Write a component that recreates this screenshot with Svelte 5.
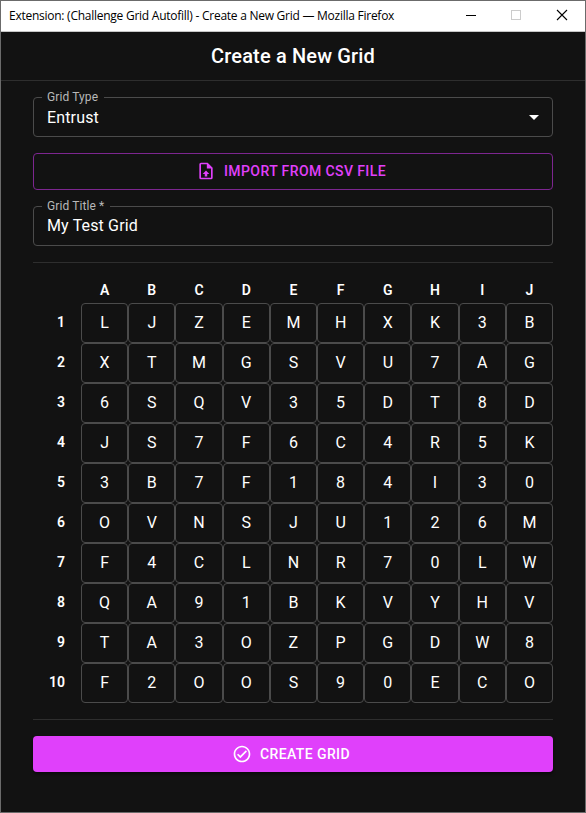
<script>
  const columns = 'ABCDEFGHIJ'.split('');
  const rows = [
    'LJZEMHXK3B',
    'XTMGSVU7AG',
    '6SQV35DT8D',
    'JS7F6C4R5K',
    '3B7F184I30',
    'OVNSJU126M',
    'F4CLNR70LW',
    'QA91BKVYHV',
    'TA3OZPGDW8',
    'F2OOS90ECO'
  ].map((row) => row.split(''));
</script>

<div class="window">
  <div class="titlebar">
    <span class="caption">Extension: (Challenge Grid Autofill) - Create a New Grid — Mozilla Firefox</span>
    <div class="controls">
      <svg width="10" height="10" viewBox="0 0 10 10" shape-rendering="crispEdges"><path d="M0 5.5H10" stroke="#000" /></svg>
      <svg width="10" height="10" viewBox="0 0 10 10" shape-rendering="crispEdges"><rect x=".5" y=".5" width="9" height="9" fill="none" stroke="#ccc" /></svg>
      <svg width="10" height="10" viewBox="0 0 10 10"><path d="M0 0L10 10M10 0L0 10" stroke="#000" stroke-width="1.1" /></svg>
    </div>
  </div>

  <header><h1>Create a New Grid</h1></header>

  <main>
    <fieldset class="field">
      <legend>Grid Type</legend>
      <span class="value">Entrust</span>
      <svg class="arrow" width="24" height="24" viewBox="0 0 24 24" fill="#fff"><path d="M7 10l5 5 5-5z" /></svg>
    </fieldset>

    <button class="outlined">
      <svg width="20" height="20" viewBox="0 0 24 24" fill="currentColor"><path d="M14 2L20 8V20A2 2 0 0 1 18 22H6A2 2 0 0 1 4 20V4A2 2 0 0 1 6 2H14M18 20V9H13V4H6V20H18M12 11.5L16 15.5H13.5V18.5H10.5V15.5H8L12 11.5Z" /></svg>
      Import from CSV file
    </button>

    <fieldset class="field title">
      <legend>Grid Title<span class="star">*</span></legend>
      <span class="value">My Test Grid</span>
    </fieldset>

    <hr />

    <div class="grid">
      <div class="row head">
        <span class="rowname"></span>
        {#each columns as column}<b>{column}</b>{/each}
      </div>
      {#each rows as row, i}
        <div class="row">
          <span class="rowname">{i + 1}</span>
          {#each row as cell}<span class="cell">{cell}</span>{/each}
        </div>
      {/each}
    </div>

    <hr />

    <button class="contained">
      <svg width="20" height="20" viewBox="0 0 24 24" fill="currentColor"><path d="M16.59 7.58L10 14.17l-2.59-2.58L6 13l4 4 8-8zM12 2C6.48 2 2 6.48 2 12s4.48 10 10 10 10-4.48 10-10S17.52 2 12 2zm0 18c-4.42 0-8-3.58-8-8s3.58-8 8-8 8 3.58 8 8-3.58 8-8 8z" /></svg>
      Create Grid
    </button>
  </main>
</div>

<style>
  * { box-sizing: border-box; }
  .window {
    width: 586px;
    height: 813px;
    border: 1px solid #6b6b6b;
    background: #121212;
    color: #fff;
    font-family: Roboto, "Liberation Sans", sans-serif;
    overflow: hidden;
  }
  .titlebar {
    height: 31px;
    background: #fff;
    border-bottom: 1px solid #c6c6c6;
    color: #000;
    display: flex;
    align-items: center;
    justify-content: space-between;
    padding: 0 18px 0 8px;
  }
  .caption {
    font: 12px/16px "Open Sans", "Noto Sans", sans-serif;
    letter-spacing: -0.255px;
    white-space: nowrap;
  }
  .controls { display: flex; gap: 35px; padding-bottom: 2px; }
  .controls svg { display: block; overflow: visible; }
  .controls svg:last-child { margin-left: 1px; }
  header {
    height: 49px;
    border-bottom: 1px solid #2e2e2e;
    display: flex;
    align-items: center;
    justify-content: center;
  }
  h1 {
    margin: 0;
    font-size: 20px;
    line-height: 32px;
    font-weight: 500;
    letter-spacing: 0.15px;
  }
  main { padding: 16px 32px 0; display: flex; flex-direction: column; }
  .field {
    height: 45px;
    margin: -5px 0 0;
    min-width: 0;
    border: 1px solid #4b4b4b;
    border-radius: 4px;
    padding: 2px 6px 0 8px;
    display: flex;
    align-items: center;
    justify-content: space-between;
  }
  legend {
    height: 11px;
    line-height: 11px;
    padding: 0 6px 0 5px;
    font-size: 12px;
    letter-spacing: 0.11px;
    color: #b8b8b8;
    white-space: nowrap;
  }
  .star { margin-left: 3px; }
  .value {
    padding-left: 5px;
    font-size: 16px;
    line-height: 23px;
    letter-spacing: 0.15px;
  }
  .arrow { display: block; }
  button {
    font: 500 14px/24.5px Roboto, "Liberation Sans", sans-serif;
    letter-spacing: 0.4px;
    text-transform: uppercase;
    border-radius: 4px;
    display: flex;
    align-items: center;
    justify-content: center;
    gap: 8px;
    padding: 0 4px 0 0;
  }
  .outlined {
    height: 37px;
    margin: 16px 0;
    background: transparent;
    border: 1px solid #7d2690;
    color: #e040fb;
  }
  .outlined svg { margin-top: -1px; }
  .contained {
    height: 36px;
    background: #e040fb;
    border: 0;
    color: #fff;
    box-shadow: 0 2px 3px rgba(0, 0, 0, 0.5);
  }
  .title { margin-top: -5px; }
  hr { width: 100%; height: 1px; margin: 16px 0; border: 0; background: #2e2e2e; }
  .row { display: flex; height: 40px; align-items: center; }
  .head { height: 24px; padding-bottom: 3px; }
  .rowname {
    width: 48px;
    flex: none;
    padding: 0 16px 2px 0;
    text-align: right;
    font-size: 14px;
    font-weight: 600;
  }
  .row b { flex: 1; text-align: center; font-size: 14px; font-weight: 600; }
  .cell {
    flex: 1 1 0;
    height: 40px;
    border: 1px solid #4b4b4b;
    border-radius: 4px;
    text-align: center;
    line-height: 38px;
    font-size: 16px;
  }
</style>
